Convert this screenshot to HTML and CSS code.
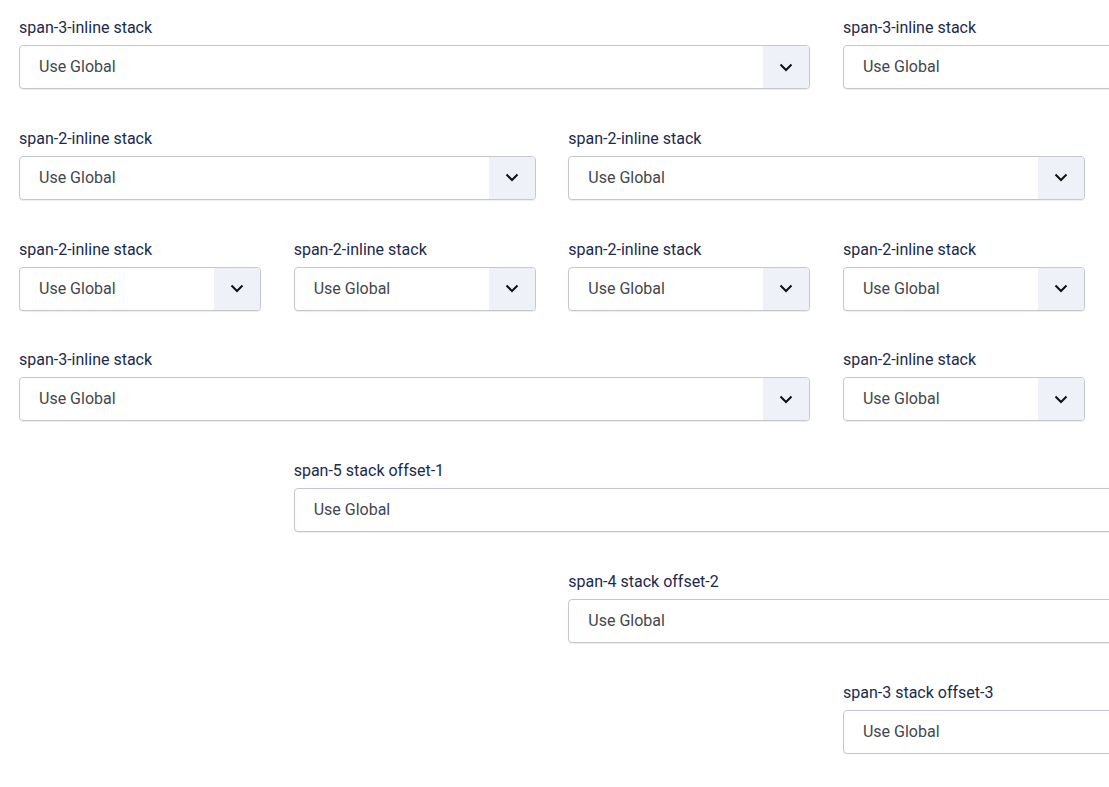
FILE: index.html
```html
<!DOCTYPE html>
<html lang="en">
<head>
<meta charset="utf-8">
<title>Spans</title>
<link rel="stylesheet" href="styles.css">
</head>
<body>
<div class="grid">
  <div class="field c1 s3"><label class="lbl">span-3-inline stack</label><div class="sel"><span class="val">Use Global</span><span class="arr"><svg width="14" height="9" viewBox="0 0 14 9"><path d="M1.5 1.5 L7 7 L12.5 1.5" fill="none" stroke="#111" stroke-width="2"/></svg></span></div></div>
  <div class="field c4 s3"><label class="lbl">span-3-inline stack</label><div class="sel"><span class="val">Use Global</span><span class="arr"><svg width="14" height="9" viewBox="0 0 14 9"><path d="M1.5 1.5 L7 7 L12.5 1.5" fill="none" stroke="#111" stroke-width="2"/></svg></span></div></div>

  <div class="field c1 s2"><label class="lbl">span-2-inline stack</label><div class="sel"><span class="val">Use Global</span><span class="arr"><svg width="14" height="9" viewBox="0 0 14 9"><path d="M1.5 1.5 L7 7 L12.5 1.5" fill="none" stroke="#111" stroke-width="2"/></svg></span></div></div>
  <div class="field c3 s2"><label class="lbl">span-2-inline stack</label><div class="sel"><span class="val">Use Global</span><span class="arr"><svg width="14" height="9" viewBox="0 0 14 9"><path d="M1.5 1.5 L7 7 L12.5 1.5" fill="none" stroke="#111" stroke-width="2"/></svg></span></div></div>

  <div class="field c1 s1"><label class="lbl">span-2-inline stack</label><div class="sel"><span class="val">Use Global</span><span class="arr"><svg width="14" height="9" viewBox="0 0 14 9"><path d="M1.5 1.5 L7 7 L12.5 1.5" fill="none" stroke="#111" stroke-width="2"/></svg></span></div></div>
  <div class="field c2 s1"><label class="lbl">span-2-inline stack</label><div class="sel"><span class="val">Use Global</span><span class="arr"><svg width="14" height="9" viewBox="0 0 14 9"><path d="M1.5 1.5 L7 7 L12.5 1.5" fill="none" stroke="#111" stroke-width="2"/></svg></span></div></div>
  <div class="field c3 s1"><label class="lbl">span-2-inline stack</label><div class="sel"><span class="val">Use Global</span><span class="arr"><svg width="14" height="9" viewBox="0 0 14 9"><path d="M1.5 1.5 L7 7 L12.5 1.5" fill="none" stroke="#111" stroke-width="2"/></svg></span></div></div>
  <div class="field c4 s1"><label class="lbl">span-2-inline stack</label><div class="sel"><span class="val">Use Global</span><span class="arr"><svg width="14" height="9" viewBox="0 0 14 9"><path d="M1.5 1.5 L7 7 L12.5 1.5" fill="none" stroke="#111" stroke-width="2"/></svg></span></div></div>

  <div class="field c1 s3"><label class="lbl">span-3-inline stack</label><div class="sel"><span class="val">Use Global</span><span class="arr"><svg width="14" height="9" viewBox="0 0 14 9"><path d="M1.5 1.5 L7 7 L12.5 1.5" fill="none" stroke="#111" stroke-width="2"/></svg></span></div></div>
  <div class="field c4 s1"><label class="lbl">span-2-inline stack</label><div class="sel"><span class="val">Use Global</span><span class="arr"><svg width="14" height="9" viewBox="0 0 14 9"><path d="M1.5 1.5 L7 7 L12.5 1.5" fill="none" stroke="#111" stroke-width="2"/></svg></span></div></div>

  <div class="field c2 s5"><label class="lbl">span-5 stack offset-1</label><div class="sel"><span class="val">Use Global</span><span class="arr"><svg width="14" height="9" viewBox="0 0 14 9"><path d="M1.5 1.5 L7 7 L12.5 1.5" fill="none" stroke="#111" stroke-width="2"/></svg></span></div></div>

  <div class="field c3 s4"><label class="lbl">span-4 stack offset-2</label><div class="sel"><span class="val">Use Global</span><span class="arr"><svg width="14" height="9" viewBox="0 0 14 9"><path d="M1.5 1.5 L7 7 L12.5 1.5" fill="none" stroke="#111" stroke-width="2"/></svg></span></div></div>

  <div class="field c4 s3"><label class="lbl">span-3 stack offset-3</label><div class="sel"><span class="val">Use Global</span><span class="arr"><svg width="14" height="9" viewBox="0 0 14 9"><path d="M1.5 1.5 L7 7 L12.5 1.5" fill="none" stroke="#111" stroke-width="2"/></svg></span></div></div>
</div>
</body>
</html>
```
FILE: styles.css
```css
html {
  overflow: hidden;
}
body {
  margin: 0;
  background: #fff;
  font-family: Roboto, "Liberation Sans", sans-serif;
  font-size: 16px;
}
.grid {
  display: grid;
  grid-template-columns: repeat(7, 242px);
  column-gap: 32.67px;
  row-gap: 37.8px;
  padding: 16px 0 0 19px;
  width: max-content;
}
.c1 { grid-column-start: 1; }
.c2 { grid-column-start: 2; }
.c3 { grid-column-start: 3; }
.c4 { grid-column-start: 4; }
.s1 { grid-column-end: span 1; }
.s2 { grid-column-end: span 2; }
.s3 { grid-column-end: span 3; }
.s4 { grid-column-end: span 4; }
.s5 { grid-column-end: span 5; }
.field {
  display: flex;
  flex-direction: column;
  gap: 5px;
}
.lbl {
  display: block;
  line-height: 24px;
  color: #1c2a4b;
  font-size: 16px;
}
.sel {
  display: flex;
  align-items: stretch;
  height: 44px;
  box-sizing: border-box;
  border: 1px solid #c4c8ce;
  border-radius: 4px;
  box-shadow: 0 1px 0 #eceef1;
  overflow: hidden;
  background: #fff;
}
.val {
  flex: 1;
  display: flex;
  align-items: center;
  padding-left: 19px;
  padding-bottom: 1px;
  color: #43474d;
  font-size: 16px;
}
.arr {
  width: 46px;
  background: #eef1f8;
  display: flex;
  align-items: center;
  justify-content: center;
}
```
